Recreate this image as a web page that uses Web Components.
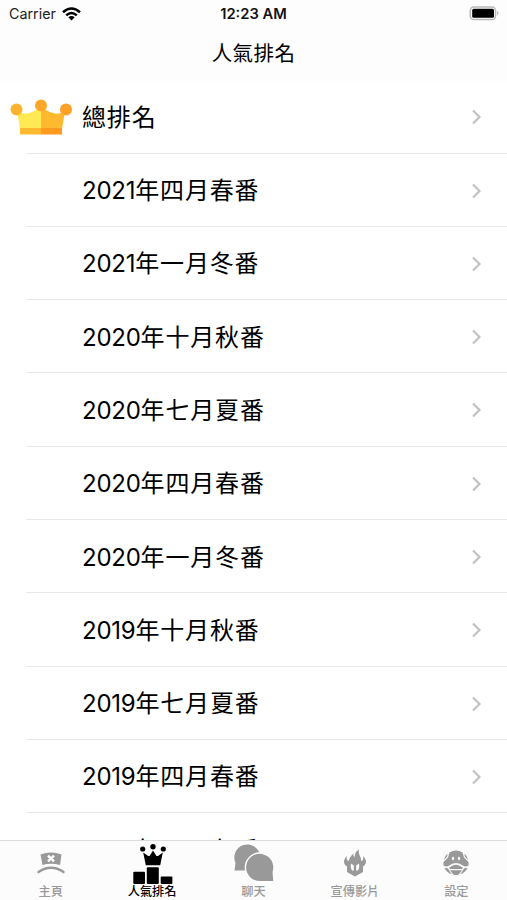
<!DOCTYPE html>
<html lang="zh-Hant">
<head>
<meta charset="UTF-8">
<meta name="viewport" content="width=device-width, initial-scale=1">
<title>人氣排名</title>
<style>
  body {
    margin: 0;
    background: #fff;
    color: #000;
    font-family: Inter, "Noto Sans CJK TC", sans-serif;
    overflow: hidden;
  }
</style>
</head>
<body>
<ranking-app></ranking-app>

<script>
const tabIcons = {
  home: `<svg width="30" height="24" viewBox="0 0 30 24">
    <path fill="#999" d="M4.500 3.500Q15-.5 25.500 3.500L24 14Q15 11.500 6.500 14Z"/>
    <path stroke="#fff" stroke-width="2.500" d="M12 4.600l6 5.800M18 4.600l-6 5.800"/>
    <path fill="none" stroke="#999" stroke-width="2.400" stroke-linecap="round" d="M2.500 21Q15 12.500 27.500 21"/>
  </svg>`,
  rank: `<svg width="42" height="41" viewBox="0 0 42 41">
    <circle cx="11.700" cy="6" r="2.600"/><circle cx="22" cy="3.700" r="2.700"/><circle cx="32.300" cy="6" r="2.600"/>
    <path d="M12.200 9.500l5 3.600h1.400L22 7.500l3.500 5.600H27l4.800-3.600-2.600 12.800H14.800Z"/>
    <rect x="2.300" y="28.800" width="11.700" height="12.200" rx="1"/>
    <rect x="15.800" y="24.300" width="12" height="16.700" rx="1"/>
    <rect x="29.700" y="33.500" width="11.700" height="7.500" rx="1"/>
  </svg>`,
  chat: `<svg width="42" height="40" viewBox="0 0 42 40" fill="#999">
    <path d="M1.500 27.500L2.500 20A13 13 0 1 1 14.500 27.500Z"/>
    <path stroke="#fff" stroke-width="2.800" paint-order="stroke" d="M40.300 38H27A13.600 13.600 0 1 1 39.500 29Z"/>
  </svg>`,
  video: `<svg width="24" height="30" viewBox="0 0 24 30">
    <path fill="#999" d="M4 8C.5 11-.5 16 4 18.500V24l8 4.500 8-4.500v-5.500c4.500-2.500 3.500-7.500 0-10.500.8 3 0 5-2 5 1-4-3.500-6-2-11.500-3.500 2-4.500 4.500-4 7.500-2-1-2-2-1-4-3.500 3-5 5.500-5 8-2 0-2.800-2-2-5Z"/>
    <path fill="#fff" d="M8 15.500l2.800 2v5H9.200Q7.200 20.500 8 15.500ZM16 15.500l-2.800 2v5h1.600Q16.800 20.500 16 15.500Z"/>
  </svg>`,
  settings: `<svg width="26" height="26" viewBox="0 0 26 26" fill="#999">
    <path d="M6.500 2.500Q13-1.500 19.500 2.500L21 7.500 25.500 12v3.500Q22 17.500 19 15 13 11 7 15 4 17.500.5 15.500V12L5 7.500Z"/>
    <path d="M6.500 17.500Q13 12.200 19.500 17.500 21 19 17 19H9Q5 19 6.500 17.500ZM1.500 18l3.200.2 4 6Q3.500 22.500 1.500 18ZM24.500 18l-3.200.2-4 6Q22.500 22.500 24.500 18ZM7 20.300h12l-3.500 4.400q-2.500.8-5 0Z"/>
    <path d="M4.800 3.500Q1.500 6 .8 10L4 6.800ZM21.200 3.500Q24.500 6 25.200 10L22 6.800Z"/>
    <ellipse cx="10" cy="8.500" rx="1.200" ry="1.800" fill="#fff"/><ellipse cx="16" cy="8.500" rx="1.200" ry="1.800" fill="#fff"/>
  </svg>`,
};

class StatusBar extends HTMLElement {
  constructor() {
    super();
    this.attachShadow({ mode: 'open' });
  }

  connectedCallback() {
    this.shadowRoot.innerHTML = `
      <style>
        :host {
          display: grid;
          grid-template-columns: 1fr auto 1fr;
          align-items: center;
          height: 27px;
          box-sizing: border-box;
          padding: 0 7px 0 9px;
          font-size: 14.300px;
          color: #222;
        }
        .carrier { display: flex; align-items: center; gap: 6px; }
        .time { margin-right: 2px; font-weight: 600; font-size: 14.700px; color: #111; }
        .battery { justify-self: end; display: flex; }
        svg { display: block; }
      </style>
      <div class="carrier">
        <span>Carrier</span>
        <svg width="19" height="14" viewBox="0 0 19 14" fill="none" stroke="#000" stroke-width="2.500">
          <path d="M1 5.200Q9.500-2.200 18 5.200M4.200 8.400Q9.500 3.600 14.800 8.400"/>
          <path d="M9.500 13.500L6.300 10.300Q9.500 7.700 12.700 10.300Z" fill="#000" stroke="none"/>
        </svg>
      </div>
      <span class="time">12:23 AM</span>
      <div class="battery">
        <svg width="31" height="15" viewBox="0 0 31 15">
          <rect x="1.300" y=".9" width="25.200" height="12.700" rx="3.600" fill="#fff" stroke="#b9b9b9" stroke-width="1.500"/>
          <rect x="3.200" y="2.700" width="21.800" height="9.100" rx="1.500"/>
          <path d="M28 5q3 2.200 0 4.500Z" fill="#b9b9b9"/>
        </svg>
      </div>
    `;
  }
}

class RankRow extends HTMLElement {
  constructor() {
    super();
    this.attachShadow({ mode: 'open' });
  }

  connectedCallback() {
    this.shadowRoot.innerHTML = `
      <style>
        :host {
          display: flex;
          align-items: center;
          flex: none;
          height: 73.300px;
          box-sizing: border-box;
          padding: 0 24px 0 10px;
          background: linear-gradient(#e9e9e9, #e9e9e9) 26px 100% / 100% 1.300px no-repeat;
        }
        .icon { width: 63px; margin-right: 9px; display: flex; }
        .label {
          flex: 1;
          padding-top: 1px;
          font-size: 24px;
          line-height: 36px;
          letter-spacing: 0.850px;
        }
        /* digits run tighter than the characters after them */
        ::slotted(span) { letter-spacing: -0.250px; }
      </style>
      <div class="icon"><slot name="icon"></slot></div>
      <div class="label"><slot></slot></div>
      <svg width="13" height="16" viewBox="0 0 13 16" fill="none" stroke="#c2c2c4" stroke-width="2.200">
        <path d="M3 1.500l6.500 6.500L3 14.500"/>
      </svg>
    `;
  }
}

class TabItem extends HTMLElement {
  constructor() {
    super();
    this.attachShadow({ mode: 'open' });
  }

  connectedCallback() {
    this.shadowRoot.innerHTML = `
      <style>
        :host {
          display: flex;
          flex-direction: column;
          align-items: center;
          flex: 1;
          color: #999;
          font-size: 12.200px;
          font-weight: 500;
        }
        :host([active]) { color: #000; }
        .icon { height: 42px; display: flex; align-items: center; }
        .label { line-height: 15px; white-space: nowrap; }
        svg { display: block; }
      </style>
      <div class="icon">${tabIcons[this.getAttribute('icon')]}</div>
      <div class="label"><slot></slot></div>
    `;
  }
}

class RankingApp extends HTMLElement {
  constructor() {
    super();
    this.attachShadow({ mode: 'open' });
  }

  connectedCallback() {
    const seasons = [
      ['2021', '年四月春番'],
      ['2021', '年一月冬番'],
      ['2020', '年十月秋番'],
      ['2020', '年七月夏番'],
      ['2020', '年四月春番'],
      ['2020', '年一月冬番'],
      ['2019', '年十月秋番'],
      ['2019', '年七月夏番'],
      ['2019', '年四月春番'],
      ['2019', '年一月冬番'],
    ];

    this.shadowRoot.innerHTML = `
      <style>
        :host {
          display: flex;
          flex-direction: column;
          height: 900px;
          overflow: hidden;
        }
        header { flex: none; height: 80.600px; background: #fdfdfd; }
        h1 {
          margin: 0;
          text-align: center;
          font-size: 20.500px;
          font-weight: 400;
          line-height: 54px;
          letter-spacing: 0.400px;
        }
        main {
          flex: 1;
          min-height: 0;
          overflow: hidden;
          display: flex;
          flex-direction: column;
        }
        nav {
          flex: none;
          display: flex;
          height: 60px;
          box-sizing: border-box;
          padding-top: 1px;
          border-top: 1px solid #dcdcdc;
          background: #fcfcfc;
        }
      </style>
      <header>
        <status-bar></status-bar>
        <h1>人氣排名</h1>
      </header>
      <main>
        <rank-row>
          <svg slot="icon" width="63" height="36" viewBox="0 0 63 36">
            <path fill="#ffea54" d="M7 12q6 4 12 2 8-2 12-8v24H10Z"/>
            <path fill="#ffb92e" d="M31 6q4 6 12 8 6 2 12-2l-3 18H31Z"/>
            <path fill="#ffb92e" d="M10 29h21v6.500H10Z"/>
            <path fill="#ff9a1f" d="M31 29h21v6.500H31Z"/>
            <circle cx="6.500" cy="10.500" r="6" fill="#ffb431"/>
            <circle cx="31" cy="6.500" r="6" fill="#ffa728"/>
            <circle cx="56" cy="10.500" r="6" fill="#ffa126"/>
          </svg>
          總排名
        </rank-row>
        ${seasons.map(([year, season]) => `<rank-row><span>${year}</span>${season}</rank-row>`).join('')}
      </main>
      <nav>
        <tab-item icon="home">主頁</tab-item>
        <tab-item icon="rank" active>人氣排名</tab-item>
        <tab-item icon="chat">聊天</tab-item>
        <tab-item icon="video">宣傳影片</tab-item>
        <tab-item icon="settings">設定</tab-item>
      </nav>
    `;
  }
}

customElements.define('status-bar', StatusBar);
customElements.define('rank-row', RankRow);
customElements.define('tab-item', TabItem);
customElements.define('ranking-app', RankingApp);
</script>
</body>
</html>
